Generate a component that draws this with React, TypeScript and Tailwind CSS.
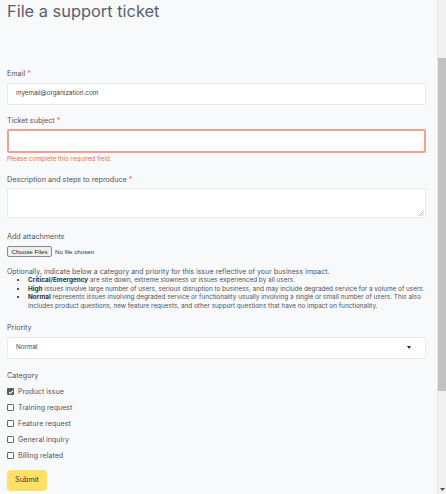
import React from "react";

const Req = () => <span className="text-[#e4604e]"> *</span>;

const Label = ({ children, className = "" }: { children: React.ReactNode; className?: string }) => (
  <div className={`text-[7.2px] leading-[10px] h-[10px] text-[#50555e] ${className}`}>{children}</div>
);

const Check = ({ label, checked = false }: { label: string; checked?: boolean }) => (
  <div className="flex items-center h-[16px] gap-[4px]">
    {checked ? (
      <span className="w-[7px] h-[7px] rounded-[1px] bg-[#5a5a5a] flex items-center justify-center">
        <svg width="6" height="6" viewBox="0 0 6 6">
          <path d="M1 3.1 L2.4 4.5 L5 1.6" stroke="#fff" strokeWidth="1.1" fill="none" />
        </svg>
      </span>
    ) : (
      <span className="w-[7px] h-[7px] rounded-[1px] border border-[#6b6b6b] bg-white" />
    )}
    <span className="text-[7.1px] leading-[10px] text-[#50555e]">{label}</span>
  </div>
);

export default function App() {
  return (
    <div className="flex w-[446px] h-[494px] overflow-hidden bg-[#f8f9fb]" style={{ fontFamily: "Inter, 'Noto Sans', sans-serif" }}>
      <div className="flex-1 flex flex-col pl-[7px] pr-[11px]">
        <h1 className="text-[16.4px] leading-[20px] h-[21px] pt-[1px] font-normal text-[#5a606b]">File a support ticket</h1>

        <Label className="mt-[48px]">Email<Req /></Label>
        <div className="mt-[4px] h-[22px] bg-white border border-[#e7e9ee] rounded-[2px] flex items-center pl-[8px] text-[6.3px] text-[#444]">
          myemail@organization.com
        </div>

        <Label className="mt-[11px]">Ticket subject<Req /></Label>
        <div className="mt-[3px] h-[24px] bg-white border-2 border-[#f3a090] rounded-[2px]" />
        <div className="mt-[1px] text-[6.3px] leading-[10px] h-[10px] text-[#e8704f]">Please complete this required field.</div>

        <Label className="mt-[11px]">Description and steps to reproduce<Req /></Label>
        <div className="mt-[3px] h-[30px] bg-white border border-[#e7e9ee] rounded-[2px] relative">
          <svg className="absolute right-[1px] bottom-[1px]" width="5" height="5" viewBox="0 0 5 5">
            <path d="M5 0 L0 5 M5 2.5 L2.5 5" stroke="#999" strokeWidth="0.7" />
          </svg>
        </div>

        <Label className="mt-[14px]">Add attachments</Label>
        <div className="mt-[4px] flex items-center h-[11px]">
          <div className="h-[11px] w-[45px] bg-[#efefef] border border-[#8a8a8a] rounded-[2px] flex items-center justify-center text-[6.2px] text-[#222]" style={{ fontFamily: "'Liberation Sans', Arial, sans-serif" }}>
            Choose Files
          </div>
          <span className="ml-[3px] text-[6.2px] text-[#333]" style={{ fontFamily: "'Liberation Sans', Arial, sans-serif" }}>No file chosen</span>
        </div>

        <div className="mt-[10px] text-[#4f545c]">
          <p className="text-[6.9px] leading-[9px] tracking-[0.05px]">Optionally, indicate below a category and priority for this issue reflective of your business impact.</p>
          <ul className="list-[square] pl-[21px] text-[6.4px] leading-[8.7px]">
            <li><b className="text-[#333]">Critical/Emergency</b> are site down, extreme slowness or issues experienced by all users.</li>
            <li><b className="text-[#333]">High</b> issues involve large number of users, serious disruption to business, and may include degraded service for a volume of users.</li>
            <li><b className="text-[#333]">Normal</b> represents issues involving degraded service or functionality usually involving a single or small number of users. This also includes product questions, new feature requests, and other support questions that have no impact on functionality.</li>
          </ul>
        </div>

        <Label className="mt-[12px]">Priority</Label>
        <div className="mt-[4px] h-[22px] bg-white border border-[#e7e9ee] rounded-[2px] flex items-center justify-between pl-[8px] pr-[14px] text-[6.3px] text-[#444]">
          <span>Normal</span>
          <svg width="4" height="3" viewBox="0 0 4 3">
            <path d="M0 0 H4 L2 3 Z" fill="#333" />
          </svg>
        </div>

        <Label className="mt-[12px]">Category</Label>
        <div className="mt-[3px] flex flex-col">
          <Check label="Product issue" checked />
          <Check label="Training request" />
          <Check label="Feature request" />
          <Check label="General inquiry" />
          <Check label="Billing related" />
        </div>

        <div className="mt-[6px] h-[21px] w-[40px] rounded-[4px] bg-[#ffe066] flex items-center justify-center text-[7.3px] text-[#333]">
          Submit
        </div>
      </div>

      <div className="w-[9px] h-full bg-[#f1f1f1] border-l border-[#e6e6e6] flex flex-col">
        <div className="h-[58px]" />
        <div className="h-[333px] bg-[#c1c1c1]" />
        <div className="flex-1" />
        <div className="h-[10px] flex items-center justify-center">
          <svg width="5" height="3" viewBox="0 0 5 3">
            <path d="M0 0 H5 L2.5 3 Z" fill="#505050" />
          </svg>
        </div>
      </div>
    </div>
  );
}
